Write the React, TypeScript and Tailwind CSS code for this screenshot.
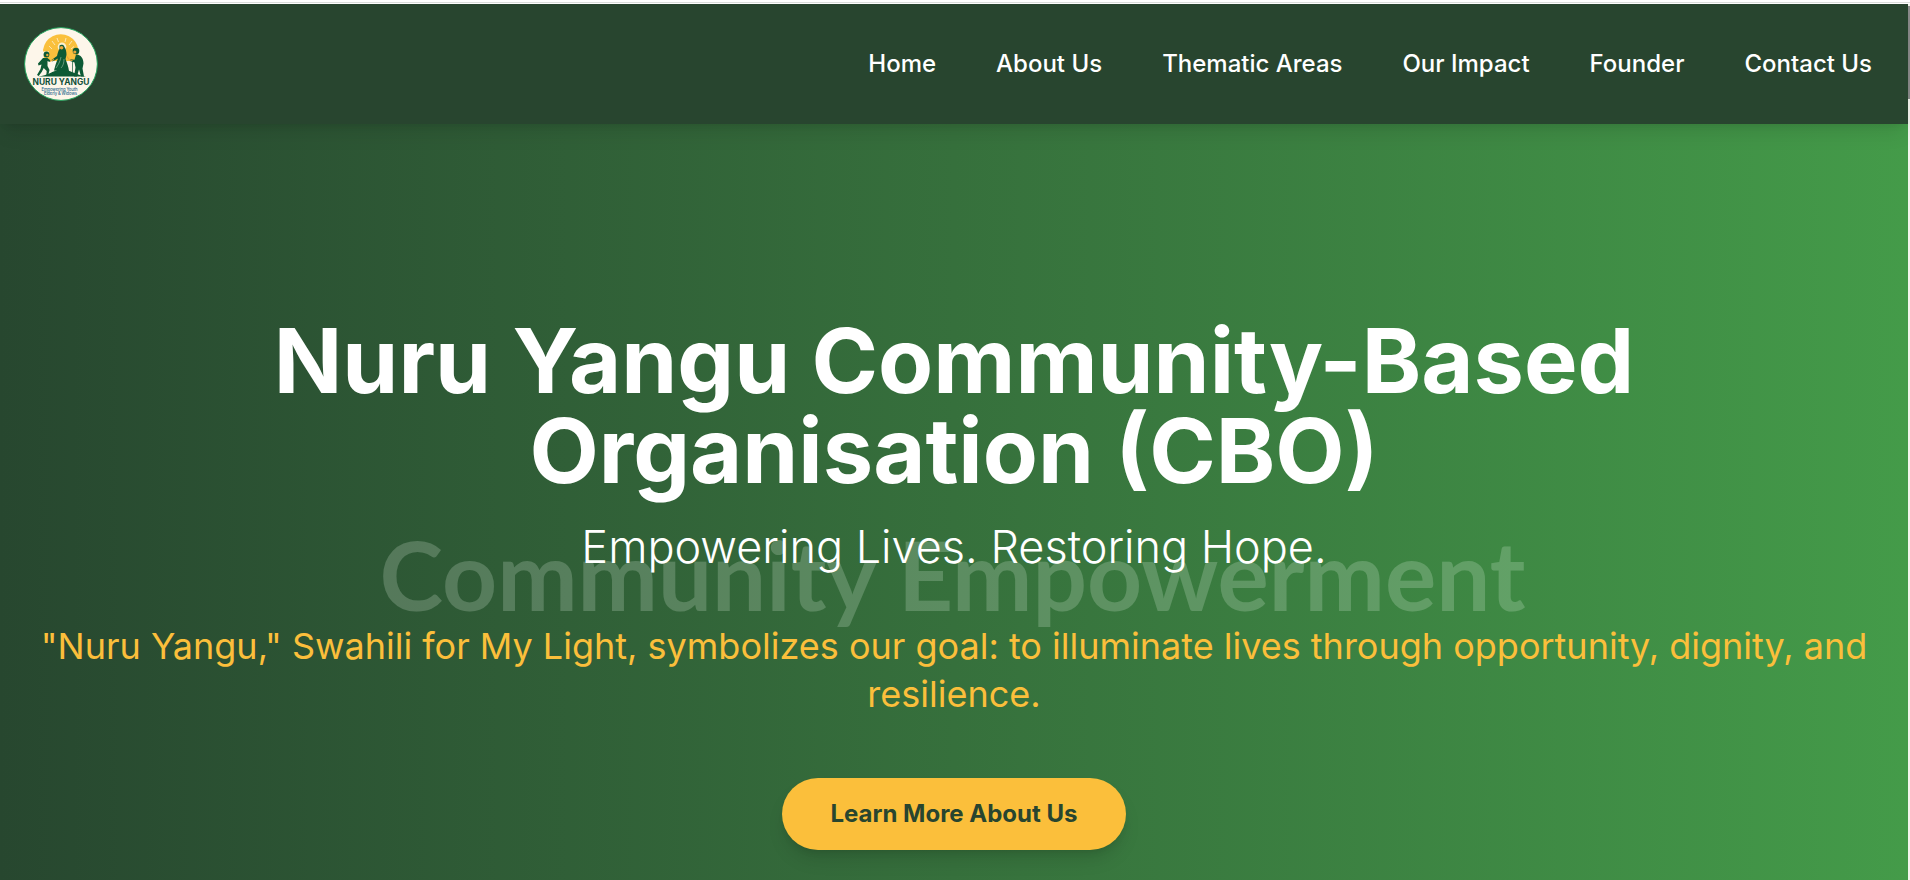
const links = ["Home", "About Us", "Thematic Areas", "Our Impact", "Founder", "Contact Us"];

function Logo() {
  return (
    <svg viewBox="0 0 74 74" className="h-[74px] w-[74px]" role="img" aria-label="Nuru Yangu">
      <circle cx="37" cy="37" r="36.4" fill="#fdf6ea" stroke="#1fa15a" strokeWidth="1" />
      <path d="M20 31 A17.8 17.8 0 1 1 53.500 31 L50 34 H23 Z" fill="#fac03c" />
      <path d="M17 24.500 h8 v4 h-8z" fill="#fdf6ea" />
      <g stroke="#fdf0cf" strokeWidth="0.8">
        <path d="M28 22l-3-3M31 18l-3-4M34.500 15l-1.500-4M41 15l1-4M45 18l3-4M47 22l3-2.500" />
      </g>
      <circle cx="38" cy="19.800" r="4.300" fill="#fdf0cf" />
      <path d="M14 49.500 C24 48.500 28 44 37 42 C46 43 52 47.500 62 49.500 Z" fill="#0d5a35" />
      <path d="M35.500 18.500 a3 3 0 0 1 5 1.500 c1.500 2 2 5 2 8 l-1 4 c1.500 4 3 8 3.500 12 L30 43.500 c1-4 2-8 4-12 l-5.500 3 -1-1.600 5.500-4 c1-4 1.500-6 2.500-7z" fill="#0d5a35" />
      <circle cx="37.600" cy="20.800" r="1.800" fill="#e9a63b" />
      <circle cx="22.500" cy="27.500" r="2.900" fill="#0d5a35" />
      <circle cx="23.300" cy="28" r="1.200" fill="#e9a63b" />
      <path d="M19 31 h4.500 l3 2.500 -1 1.500 -2-1 v5 l2 4 -1.500 6 h-1.800 l.5-5 -3-3 -2 4 -3 4 -1.700-1 3.500-6 1-4.500 -3 1 -.5-2z" fill="#0d5a35" />
      <circle cx="52" cy="24" r="3.300" fill="#0d5a35" />
      <circle cx="50.800" cy="25" r="1.600" fill="#e9a63b" />
      <path d="M52 27.500 c5 0 7.500 4 7.500 9 l-1 5 1.500 8 h-3 l-2-7 -2 7 h-3 l1.500-9 -1-5 -4.500-1.500 .5-1.800 4 .5z" fill="#0d5a35" />
      <path d="M30 32.500 l-4 2M42.500 29 l3 4 3 .5" stroke="#e9a63b" strokeWidth="1.200" fill="none" />
      <path d="M48.500 34 v15" stroke="#0d5a35" strokeWidth="0.700" />
      <path d="M37 30 c-1 5-3 8-5 11M40 32 c0 4-1 7-3 9" stroke="#e8efdf" strokeWidth="0.400" fill="none" />
      <text x="37" y="58.200" textAnchor="middle" textLength="57" lengthAdjust="spacingAndGlyphs" fontFamily="Inter, sans-serif" fontWeight="700" fontSize="8.400" fill="#12503a">NURU YANGU</text>
      <text x="35.500" y="63.800" textAnchor="middle" textLength="36" fontFamily="Inter, sans-serif" fontWeight="500" fontSize="4.200" fill="#2a6a8c">Empowering Youth</text>
      <text x="36.500" y="68.200" textAnchor="middle" textLength="33" fontFamily="Inter, sans-serif" fontWeight="500" fontSize="4.200" fill="#2a6a8c">Elderly &amp; Widows</text>
    </svg>
  );
}

export default function App() {
  return (
    <div className="flex h-[880px] w-full flex-col overflow-hidden bg-white font-['Inter',sans-serif]">
      <div className="h-1 shrink-0 pt-[2px]">
        <div className="h-px bg-[#dcdfdc]" />
      </div>
      <div className="flex min-h-0 flex-1">
        <div className="flex min-w-0 flex-1 flex-col">
          <header className="relative z-10 flex h-[120px] shrink-0 items-center justify-between bg-[#28452f] pr-9 pl-6 shadow-[0_12px_19px_-4px_rgba(0,0,0,0.1),0_5px_8px_-5px_rgba(0,0,0,0.1)]">
            <Logo />
            <nav className="flex gap-[60px] text-2xl font-medium text-white">
              {links.map((link) => (
                <a key={link} href="#" className="whitespace-nowrap">{link}</a>
              ))}
            </nav>
          </header>
          <main className="relative flex flex-1 flex-col items-center bg-linear-to-r from-[#27472f] via-[#36703c] to-[#449b49] px-10 pt-[192px] text-center">
            <div className="pointer-events-none absolute top-[390px] right-[3px] left-0 font-['Lato',sans-serif] text-[96px] leading-[120px] font-bold text-[#f4fff4]/20">
              Community Empowerment
            </div>
            <h1 className="relative w-[1400px] text-[90px] leading-[90px] font-bold text-white">
              Nuru Yangu Community-Based Organisation (CBO)
            </h1>
            <p className="relative mt-[21px] text-[45px] leading-[60px] font-light text-white">
              Empowering Lives. Restoring Hope.
            </p>
            <p className="relative mt-[45px] w-full text-[36px] leading-[48px] text-[#fbbf3b]">
              "Nuru Yangu," Swahili for My Light, symbolizes our goal: to illuminate lives through opportunity, dignity, and resilience.
            </p>
            <a href="#" className="relative mt-[60px] flex h-[72px] w-[344px] items-center justify-center rounded-full bg-[#fbbf3b] text-2xl font-bold text-[#28452f] shadow-[0_12px_19px_-4px_rgba(0,0,0,0.13),0_5px_8px_-5px_rgba(0,0,0,0.13)]">
              Learn More About Us
            </a>
          </main>
        </div>
        <div className="w-[2px] shrink-0 bg-[#f4f4ee] pt-[2px]">
          <div className="h-[93px] bg-[#8b8b8b]" />
        </div>
      </div>
    </div>
  );
}
